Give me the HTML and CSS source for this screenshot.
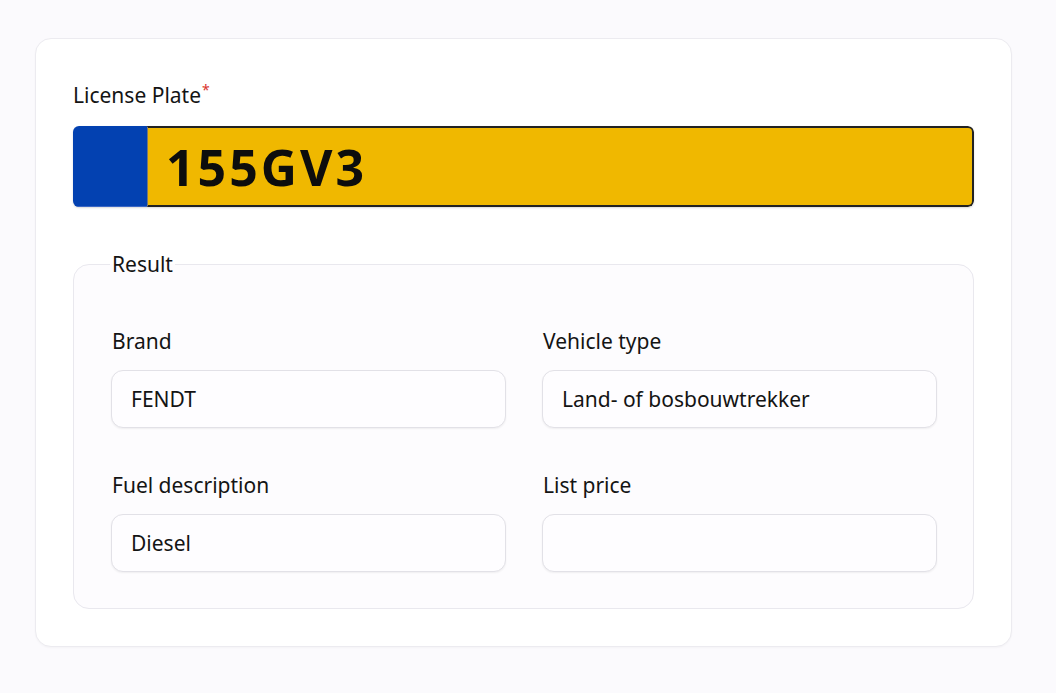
FILE: index.html
```html
<!DOCTYPE html>
<html>
<head>
<meta charset="utf-8">
<link rel="stylesheet" href="styles.css">
</head>
<body>
<div class="card">
  <div class="label">License Plate<span class="req">*</span></div>
  <div class="plate">
    <div class="plate-blue"></div>
    <div class="plate-yellow">155GV3</div>
  </div>
  <fieldset class="result">
    <legend>Result</legend>
    <div class="grid">
      <div class="field">
        <div class="flabel">Brand</div>
        <div class="input">FENDT</div>
      </div>
      <div class="field">
        <div class="flabel">Vehicle type</div>
        <div class="input">Land- of bosbouwtrekker</div>
      </div>
      <div class="field">
        <div class="flabel">Fuel description</div>
        <div class="input">Diesel</div>
      </div>
      <div class="field">
        <div class="flabel">List price</div>
        <div class="input"></div>
      </div>
    </div>
  </fieldset>
</div>
</body>
</html>
```
FILE: styles.css
```css
* { box-sizing: border-box; }
html, body { margin: 0; padding: 0; }
body {
  background: #fbfafd;
  font-family: "Noto Sans", "Open Sans", sans-serif;
  color: #141414;
  width: 1056px;
  height: 693px;
  overflow: hidden;
}
.card {
  margin: 38px 0 0 35px;
  width: 977px;
  height: 609px;
  background: #ffffff;
  border: 1px solid #ecebf0;
  border-radius: 16px;
  padding: 43px 37px 0 37px;
  box-shadow: 0 1px 2px rgba(0,0,0,0.03);
}
.label {
  font-size: 21px;
  line-height: 26px;
  height: 26px;
}
.req {
  color: #d9342b;
  font-size: 14px;
  vertical-align: top;
  position: relative;
  top: -5px;
  margin-left: 1px;
}
.plate {
  margin-top: 18px;
  height: 81px;
  display: flex;
  border-radius: 6px;
  overflow: hidden;
  box-shadow: 0 1px 2px rgba(0,0,0,0.15);
}
.plate-blue {
  width: 74px;
  background: #0341b1;
  border-bottom: 1px solid #3a66c4;
}
.plate-yellow {
  flex: 1;
  background: #f0b800;
  border: 2px solid #222;
  border-left: 1px solid #777;
  border-radius: 0 6px 6px 0;
  font-weight: 700;
  font-size: 50px;
  letter-spacing: 3px;
  line-height: 79px;
  padding-left: 18px;
  color: #0d0d0d;
}
.result {
  margin: 44px 0 0 0;
  border: 1px solid #e9e8ee;
  border-radius: 16px;
  padding: 51px 36px 36px 37px;
  background: #fdfcfe;
  min-width: 0;
}
.result legend {
  font-size: 21px;
  line-height: 26px;
  padding: 0 2px;
  margin-left: -1px;
}
.grid {
  display: grid;
  grid-template-columns: 395px 395px;
  column-gap: 36px;
  row-gap: 44px;
}
.flabel {
  font-size: 21px;
  line-height: 26px;
  margin-bottom: 16px;
  padding-left: 1px;
}
.input {
  height: 58px;
  border: 1px solid #e2e1e7;
  border-radius: 12px;
  background: #fefdff;
  padding-left: 19px;
  font-size: 21px;
  line-height: 56px;
  box-shadow: 0 1px 2px rgba(0,0,0,0.06);
}
```
